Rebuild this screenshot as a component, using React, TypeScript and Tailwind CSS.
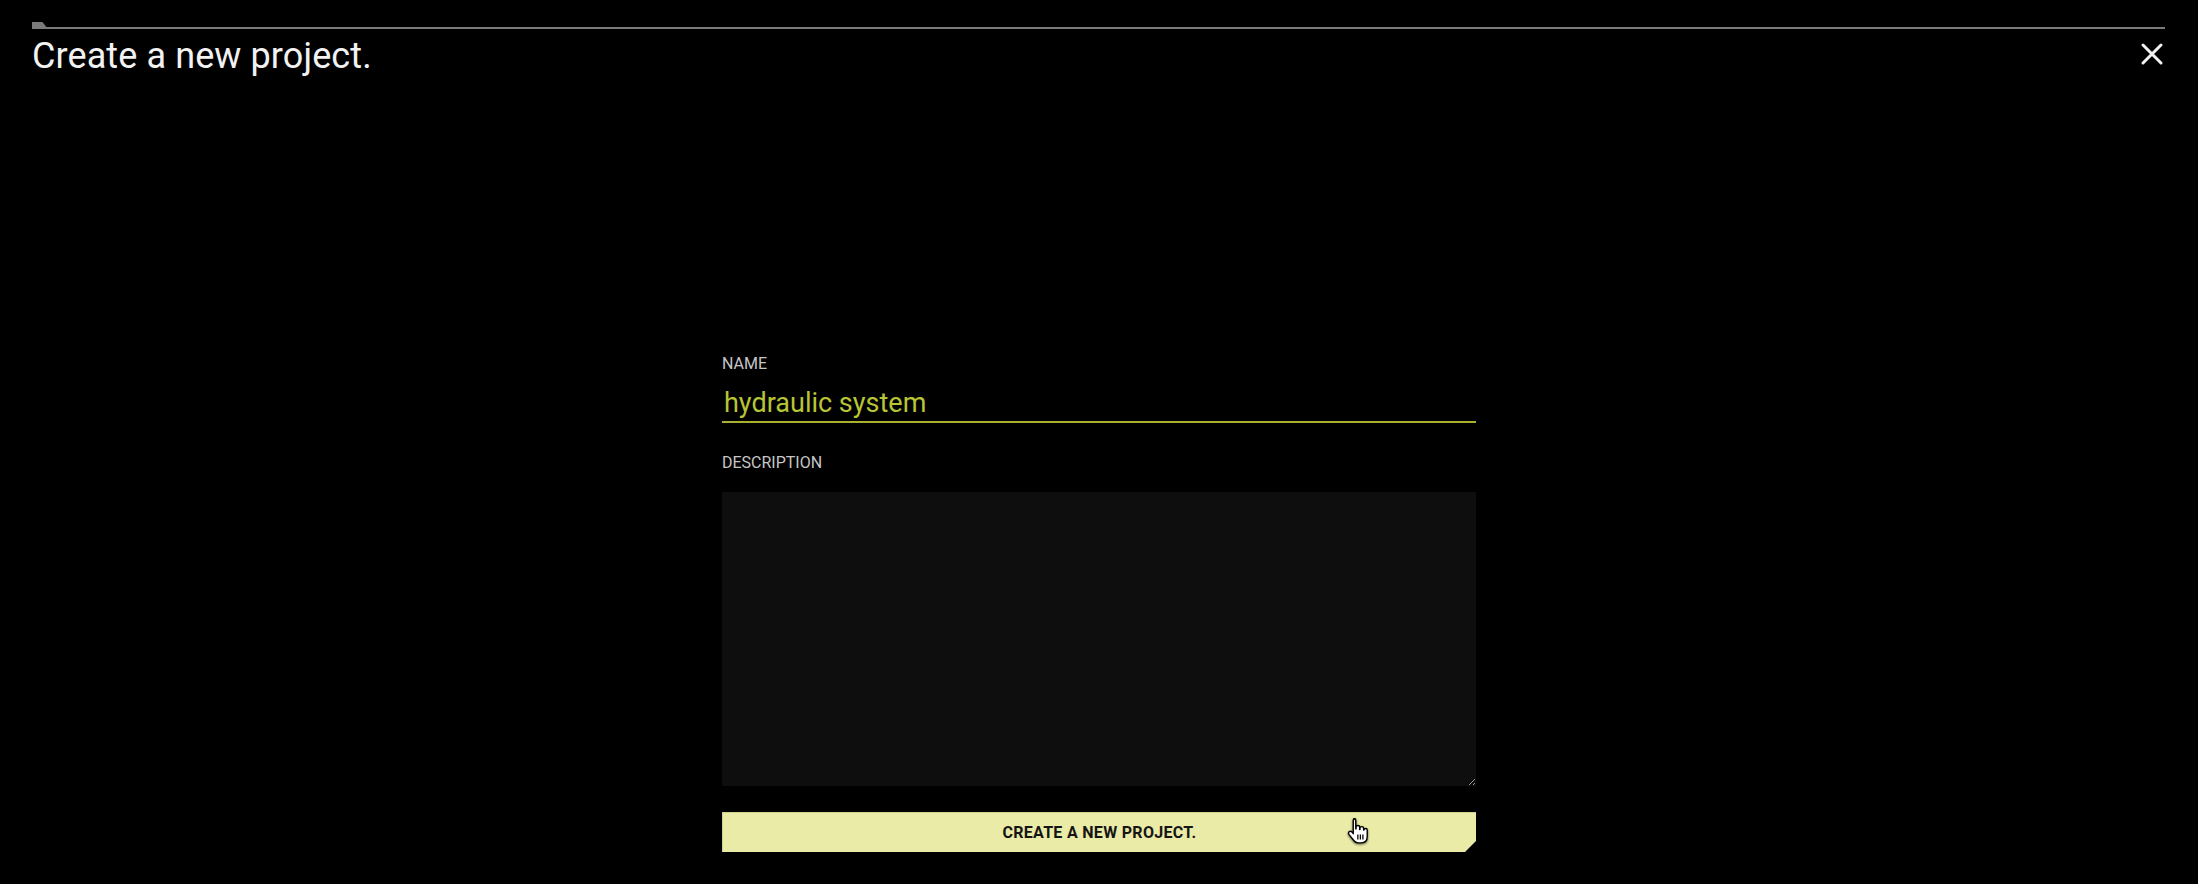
import { useState } from "react";

const HandCursor = () => (
    <svg width="24" height="28" viewBox="0 0 17 20" className="drop-shadow-[0_1px_1px_rgba(0,0,0,0.6)]">
        <path
            d="M5.5 1.2c.8 0 1.4.6 1.4 1.4V8.5h.2V7.3c0-.7.6-1.2 1.3-1.2s1.3.5 1.3 1.2V9h.2V8.1c0-.7.6-1.2 1.3-1.2s1.3.5 1.3 1.2v1.2h.2c0-.7.6-1.1 1.2-1.1.7 0 1.2.5 1.2 1.2v4.6c0 2.6-1.6 4.5-4.4 4.5H8.6c-1.4 0-2.3-.6-3.1-1.7L2 12.4c-.5-.7-.3-1.5.3-1.9.6-.4 1.4-.3 1.9.3l.9 1.1V2.6c0-.8.6-1.4 1.4-1.4z"
            fill="#fff"
            stroke="#000"
            strokeWidth="1"
            strokeLinejoin="round"
        />
        <path d="M8.4 12.5v3.6M10.2 12.5v3.6M12 12.5v3.6" stroke="#000" strokeWidth="0.9" />
    </svg>
);

const App = () => {
    const [name, setName] = useState("hydraulic system");
    const [description, setDescription] = useState("");

    return (
        <div className="w-[2198px] h-[884px] bg-black flex flex-col font-['Roboto','Liberation_Sans',sans-serif]">
            {/* header */}
            <div className="h-[80px] pl-[32px] pr-[33px] pt-[22px] flex flex-col">
                <div className="flex items-end h-[7px]">
                    <div className="w-[16px] h-[7px] bg-[#7a7a7a] [clip-path:polygon(0_0,65%_0,100%_100%,0_100%)]"></div>
                    <div className="flex-1 h-[2px] bg-[#7a7a7a] -ml-[16px]"></div>
                </div>
                <div className="flex justify-between items-start mt-[9px]">
                    <div className="text-[36px] leading-none text-[#f2f2f2] tracking-[0.1px]">
                        Create a new project.
                    </div>
                    <svg width="24" height="24" viewBox="0 0 24 24" className="mt-[4px] mr-[1px] cursor-pointer">
                        <path d="M3 3L21 21M21 3L3 21" stroke="#f2f2f2" strokeWidth="3" strokeLinecap="round" />
                    </svg>
                </div>
            </div>

            {/* form */}
            <div className="w-[754px] mx-auto mt-[276px] flex flex-col">
                <div className="text-[16px] leading-none text-[#c6c6c6] h-[16px]">NAME</div>
                <input
                    type="text"
                    value={name}
                    onChange={(e) => setName(e.target.value)}
                    className="mt-[14px] h-[37px] w-full bg-transparent border-b-2 border-[#a8b02e] outline-none pl-[2px] text-[27px] text-[#b8c535]"
                    spellCheck="false"
                />
                <div className="mt-[32px] text-[16px] leading-none text-[#c6c6c6] h-[16px]">DESCRIPTION</div>
                <textarea
                    value={description}
                    onChange={(e) => setDescription(e.target.value)}
                    className="mt-[21px] h-[294px] w-full bg-[#0e0e0e] outline-none text-[#ddd] p-2 text-[16px]"
                ></textarea>
                <div className="relative mt-[26px] h-[40px] w-full bg-[#e9eba6] border-l border-t border-[#cfd18c] flex items-center justify-center cursor-pointer [clip-path:polygon(0_0,100%_0,100%_29px,calc(100%-11px)_100%,0_100%)]">
                    <span className="text-[16px] font-bold text-[#151515] tracking-[0.3px]">
                        CREATE A NEW PROJECT.
                    </span>
                    <div className="absolute left-[623px] top-[4px]">
                        <HandCursor />
                    </div>
                </div>
            </div>
        </div>
    );
};
export default App;
